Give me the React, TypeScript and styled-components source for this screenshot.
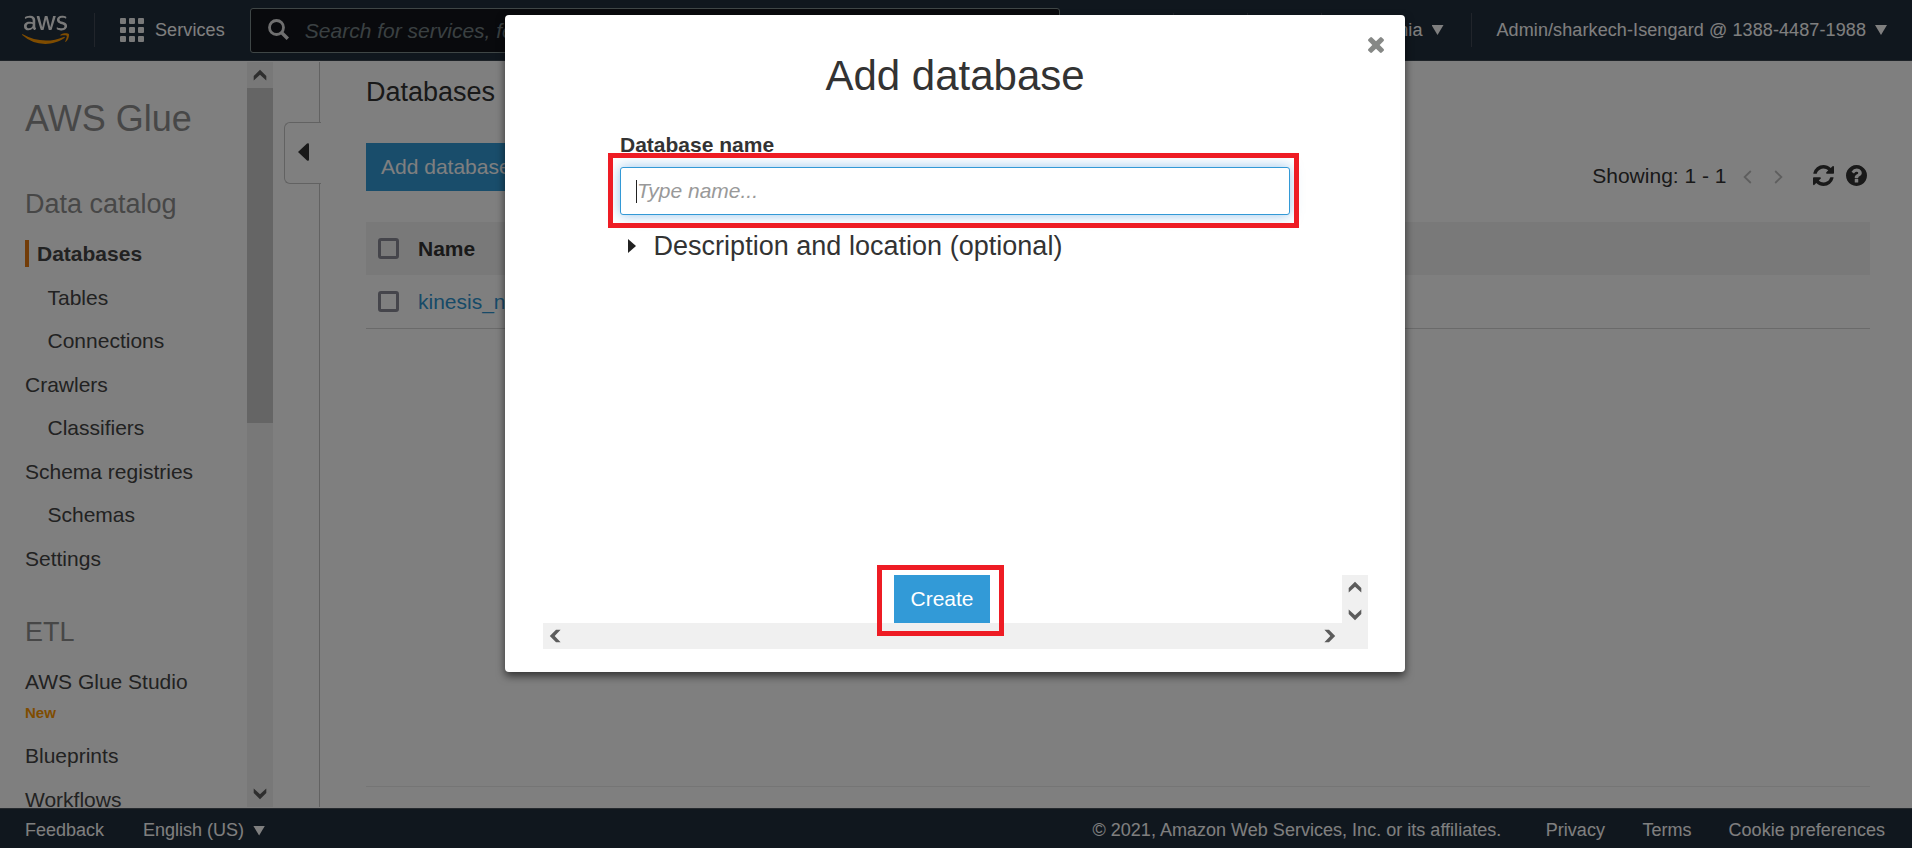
import React from "react";
import styled, { createGlobalStyle, css } from "styled-components";
import { FaAws } from "react-icons/fa";

const GlobalStyle = createGlobalStyle`
  * { box-sizing: border-box; }
  html, body { margin: 0; padding: 0; overflow: hidden; }
  body {
    font-family: "Liberation Sans", Arial, Helvetica, sans-serif;
    font-size: 21px;
    color: #333;
    background: #fff;
  }
  button, input { font: inherit; }
`;

const Page = styled.div`
  position: relative;
  display: flex;
  flex-direction: column;
  width: 1912px;
  height: 848px;
  overflow: hidden;
  background: #fff;
`;

/* ---------- top bar ---------- */

const TopBar = styled.header`
  display: flex;
  align-items: center;
  height: 61px;
  flex: none;
  background: #212e3c;
  border-bottom: 1px solid #3d4650;
  color: #fff;
  font-size: 18px;
  letter-spacing: 0.1px;
  white-space: nowrap;
`;

const LogoIcon = styled(FaAws)`
  flex: none;
  width: 47px;
  height: 37.6px;
  margin: -1px 0 0 21.5px;
  path { fill: url(#aws-logo-colors); }
`;

const GradientDefs = styled.svg`
  width: 0;
  height: 0;
  position: absolute;
`;

const Divider = styled.span<{ $before?: number; $after?: number }>`
  flex: none;
  width: 1px;
  height: 34px;
  margin: 0 ${(p) => p.$after ?? 0}px 0 ${(p) => p.$before ?? 0}px;
  background: #424a56;
`;

const GridIcon = styled.span`
  display: grid;
  grid-template-columns: repeat(3, 6px);
  gap: 3px;
  margin-right: 11px;
  i {
    height: 6px;
    border-radius: 1px;
    background: #f2f2f2;
  }
`;

const TopLabel = styled.span`
  line-height: 20px;
`;

const SearchBox = styled.div`
  display: flex;
  align-items: center;
  flex: none;
  width: 810px;
  height: 45px;
  margin-left: 25px;
  padding: 1px 0 0 17px;
  border: 1px solid #7f8c8d;
  border-radius: 3px;
  background: #12141a;
  color: #758184;
  font-size: 21px;
  font-style: italic;
  letter-spacing: 0;
  svg { margin: -2px 16px 0 0; }
`;

const TopRight = styled.div`
  display: flex;
  align-items: center;
  margin-left: auto;
  padding-right: 25px;
`;

const Caret = styled.span`
  width: 12px;
  height: 10px;
  margin-left: 9px;
  background: currentColor;
  clip-path: polygon(0 0, 100% 0, 50% 100%);
`;

/* ---------- sidebar ---------- */

const Body = styled.div`
  display: flex;
  flex: 1;
  min-height: 0;
  padding: 1px 0;
`;

const Sidebar = styled.nav`
  width: 247px;
  padding: 37px 0 0 25px;
  overflow: hidden;
  white-space: nowrap;
`;

const ServiceName = styled.h1`
  margin: 0 0 45px;
  font-size: 36px;
  font-weight: 400;
  line-height: 40px;
  color: #8f8f8f;
`;

const SectionTitle = styled.h2<{ $top?: number }>`
  margin: ${(p) => p.$top ?? 0}px 0 8px;
  font-size: 27px;
  font-weight: 400;
  line-height: 40px;
  color: #8f8f8f;
`;

const NavItem = styled.div<{ $level?: number; $active?: boolean }>`
  display: flex;
  align-items: center;
  height: 43.5px;
  padding-left: ${(p) => (p.$level ? 22.5 : 0)}px;
  color: #444;
  span { line-height: 27px; }
  ${(p) =>
    p.$active &&
    css`
      font-weight: 700;
      span {
        padding-left: 8px;
        border-left: 4px solid #e47911;
      }
    `}
`;

const NewTag = styled.div`
  margin-bottom: 13.5px;
  font-size: 15px;
  font-weight: 700;
  line-height: 17px;
  color: #f90;
`;

const ScrollTrack = styled.div`
  display: flex;
  flex: none;
  flex-direction: column;
  width: 26px;
  justify-content: space-between;
  background: #f0f0f0;
`;

const ScrollButton = styled.span<{ $width?: number; $height?: number }>`
  display: flex;
  flex: none;
  align-items: center;
  justify-content: center;
  width: ${(p) => p.$width ?? 26}px;
  height: ${(p) => p.$height ?? 26}px;
`;

const ScrollThumb = styled.span`
  height: 335px;
  margin-bottom: auto;
  background: #cacaca;
`;

const Gutter = styled.div`
  display: flex;
  flex-direction: column;
  flex: none;
  width: 47px;
`;

const GutterLine = styled.div<{ $height?: number }>`
  ${(p) => (p.$height ? `height: ${p.$height}px;` : "flex: 1;")}
  border-right: 1px solid #c4c4c4;
`;

const CollapseTab = styled.div`
  display: flex;
  align-items: center;
  width: 37px;
  height: 62px;
  margin-left: 11px;
  padding: 0 0 3px 13px;
  border: 1px solid #c4c4c4;
  border-right: 0;
  border-radius: 6px 0 0 6px;
`;

/* ---------- main content ---------- */

const Main = styled.main`
  display: flex;
  flex-direction: column;
  flex: 1;
  padding: 10px 42px 0 46px;
`;

const PageTitle = styled.h2`
  margin: 0;
  font-size: 27px;
  font-weight: 400;
  line-height: 40px;
`;

const Toolbar = styled.div`
  display: flex;
  align-items: center;
  margin: 31px 0;
  height: 48px;
`;

const PrimaryButton = styled.button<{ $width?: number }>`
  width: ${(p) => (p.$width ? `${p.$width}px` : "auto")};
  height: 48px;
  padding: 0 15px;
  border: 0;
  border-radius: 0;
  background: #329ad7;
  color: #fff;
  font-size: 21px;
  line-height: 48px;
  white-space: nowrap;
`;

const Pager = styled.div`
  display: flex;
  align-items: center;
  height: 22px;
  margin: 18px 3px 0 auto;
  svg { flex: none; }
`;

const PagerArrows = styled.span`
  display: flex;
  gap: 22px;
  margin: 1px 30px 0 16.5px;
`;

const PagerIcons = styled.span`
  display: flex;
  gap: 12px;
  margin-top: -1px;
`;

const TableRow = styled.div<{ $head?: boolean }>`
  display: flex;
  align-items: center;
  height: ${(p) => (p.$head ? 53 : 54)}px;
  padding-left: 12px;
  background: ${(p) => (p.$head ? "#f3f3f3" : "transparent")};
  border-bottom: ${(p) => (p.$head ? "0" : "1px solid #d5d5d5")};
  font-weight: ${(p) => (p.$head ? 700 : 400)};
`;

const CheckBox = styled.span`
  width: 21px;
  height: 21px;
  margin-right: 19px;
  border: 3px solid #8b8b97;
  border-radius: 3px;
`;

const LinkText = styled.a`
  color: #2f95d0;
`;

const BottomRule = styled.div`
  height: 1px;
  margin-top: auto;
  margin-bottom: 20px;
  background: #eaeaea;
`;

/* ---------- footer ---------- */

const Footer = styled.footer`
  display: flex;
  align-items: center;
  flex: none;
  height: 40px;
  padding: 4px 27px 0 25px;
  border-top: 1px solid #4a535c;
  background: #212e3c;
  color: #fff;
  font-size: 18px;
  white-space: nowrap;
`;

const FooterItem = styled.span<{ $gap?: number }>`
  display: flex;
  align-items: center;
  margin-left: ${(p) => p.$gap ?? 0}px;
`;

const FooterRight = styled.div`
  display: flex;
  margin-left: auto;
  letter-spacing: 0.02px;
`;

/* ---------- modal ---------- */

const Overlay = styled.div`
  position: absolute;
  inset: 0;
  display: flex;
  justify-content: center;
  align-items: flex-start;
  padding: 15px 2px 0 0;
  background: rgba(0, 0, 0, 0.5);
`;

const Dialog = styled.section`
  position: relative;
  display: flex;
  flex-direction: column;
  width: 900px;
  height: 657px;
  border-radius: 4px;
  background: #fff;
  box-shadow: 0 4px 9px rgba(0, 0, 0, 0.6);
`;

const CloseButton = styled.button`
  position: absolute;
  top: 22px;
  right: 21px;
  display: flex;
  padding: 0;
  border: 0;
  background: none;
`;

const DialogTitle = styled.h2`
  margin: 37px 0 33px;
  font-size: 42px;
  font-weight: 400;
  line-height: 48px;
  text-align: center;
`;

const Form = styled.div`
  display: flex;
  flex-direction: column;
  flex: 1;
  width: 670px;
  margin-left: 115px;
`;

const FieldLabel = styled.label`
  font-weight: 700;
  line-height: 23px;
`;

const Field = styled.div`
  position: relative;
  margin-top: -1px;
  padding-top: 12px;
  padding-bottom: 15px;
`;

const TextInput = styled.div`
  display: flex;
  align-items: center;
  height: 48px;
  padding-left: 15px;
  border: 1px solid #3399d6;
  border-radius: 3px;
  background: #fff;
  box-shadow: 0 0 13px rgba(51, 140, 215, 0.5);
  color: #999;
  font-style: italic;
`;

const TextCursor = styled.span`
  width: 1px;
  height: 23px;
  background: #222;
`;

const FieldHighlight = styled.span`
  position: absolute;
  top: -2px;
  left: -12px;
  width: 691px;
  height: 75px;
  border: 5px solid #ee1c24;
`;

const Disclosure = styled.div`
  display: flex;
  align-items: center;
  padding-left: 8px;
  font-size: 27px;
  line-height: 32px;
  letter-spacing: 0.02px;
  svg { margin-right: 17.5px; }
`;

const ActionArea = styled.div`
  display: flex;
  flex-direction: column;
  width: 825px;
  margin: 0 0 23px 38px;
`;

const ActionRow = styled.div`
  display: flex;
  justify-content: flex-end;
  height: 48px;
`;

const CreateWrap = styled.div`
  position: relative;
  margin-right: 352px;
`;

const CreateHighlight = styled.span`
  position: absolute;
  top: -10px;
  left: -17px;
  width: 127px;
  height: 71px;
  border: 5px solid #ee1c24;
`;

const HorizontalScroll = styled.div`
  display: flex;
  justify-content: space-between;
  height: 26px;
  padding-right: 26px;
  background: #f0f0f0;
`;

/* ---------- icons ---------- */

const chevronTurn = { up: 0, right: 90, down: 180, left: 270 };

function ScrollChevron({ dir }: { dir: keyof typeof chevronTurn }) {
  return (
    <svg width="14" height="14" viewBox="-7 -7 14 14">
      <path
        d="M-6.3 1 0-5.2 6.3 1v4.6L0-.3-6.3 5.600Z"
        fill="#5c5c5c"
        transform={`rotate(${chevronTurn[dir]})`}
      />
    </svg>
  );
}

function SearchGlyph() {
  return (
    <svg width="21" height="21" viewBox="0 0 21 21" fill="none" stroke="#dedede" strokeWidth="2.8">
      <circle cx="8.5" cy="8.5" r="7" />
      <path d="m13.5 13.5 6.3 6.3" strokeWidth="3.4" />
    </svg>
  );
}

function TimesIcon() {
  return (
    <svg width="16" height="16" viewBox="302 366 1188 1188" fill="#868886">
      <path d="M1490 1322q0 40-28 68l-136 136q-28 28-68 28t-68-28l-294-294-294 294q-28 28-68 28t-68-28l-136-136q-28-28-28-68t28-68l294-294-294-294q-28-28-28-68t28-68l136-136q28-28 68-28t68 28l294 294 294-294q28-28 68-28t68 28l136 136q28 28 28 68t-28 68l-294 294 294 294q28 28 28 68z" />
    </svg>
  );
}

function RefreshIcon() {
  return (
    <svg width="21" height="21" viewBox="128 128 1536 1536" fill="#333">
      <path d="M1639 1056q0 5-1 7-64 268-268 434.5t-478 166.5q-146 0-282.5-55t-243.5-157l-129 129q-19 19-45 19t-45-19-19-45v-448q0-26 19-45t45-19h448q26 0 45 19t19 45-19 45l-137 137q71 66 161 102t187 36q134 0 250-65t186-179q11-17 53-117 8-23 30-23h192q13 0 22.5 9.5t9.5 22.5zm25-800v448q0 26-19 45t-45 19h-448q-26 0-45-19t-19-45 19-45l138-138q-148-137-349-137-134 0-250 65t-186 179q-11 17-53 117-8 23-30 23h-199q-13 0-22.5-9.5t-9.5-22.5v-7q65-268 270-434.5t480-166.5q146 0 284 55.5t245 156.5l130-129q19-19 45-19t45 19 19 45z" />
    </svg>
  );
}

function HelpIcon() {
  return (
    <svg width="21" height="21" viewBox="128 128 1536 1536" fill="#333">
      <path d="M1024 1376v-192q0-14-9-23t-23-9h-192q-14 0-23 9t-9 23v192q0 14 9 23t23 9h192q14 0 23-9t9-23zm256-672q0-88-55.5-163t-138.5-116-170-41q-243 0-371 213-15 24 8 42l132 100q7 6 19 6 16 0 25-12 53-68 86-92 34-24 86-24 48 0 85.5 26t37.5 59q0 38-20 61t-68 45q-63 28-115.5 86.5t-52.5 125.5v36q0 14 9 23t23 9h192q14 0 23-9t9-23q0-19 21.5-49.5t54.5-49.5q32-18 49-28.5t46-35 44.5-48 28-60.5 12.5-81zm384 192q0 209-103 385.5t-279.5 279.5-385.5 103-385.5-103-279.5-279.5-103-385.5 103-385.5 279.5-279.5 385.5-103 385.5 103 279.5 279.5 103 385.5z" />
    </svg>
  );
}

function PageArrow({ next }: { next?: boolean }) {
  return (
    <svg width="9" height="14" viewBox="0 0 9 14" fill="none" stroke="#bdbdbd" strokeWidth="1.8">
      <path d={next ? "M1.2 1 7.4 7l-6.2 6" : "M7.8 1 1.6 7l6.2 6"} />
    </svg>
  );
}

const catalogLinks = [
  { label: "Databases", active: true },
  { label: "Tables", level: 1 },
  { label: "Connections", level: 1 },
  { label: "Crawlers" },
  { label: "Classifiers", level: 1 },
  { label: "Schema registries" },
  { label: "Schemas", level: 1 },
  { label: "Settings" },
];

export default function App() {
  return (
    <Page>
      <GlobalStyle />
      <TopBar>
        <GradientDefs>
          <linearGradient id="aws-logo-colors" x1="0" y1="0" x2="0" y2="1">
            <stop offset="0.62" stopColor="#f5f5f5" />
            <stop offset="0.62" stopColor="#f90" />
          </linearGradient>
        </GradientDefs>
        <LogoIcon />
        <Divider $before={25.5} $after={25} />
        <GridIcon>
          {Array.from({ length: 9 }, (_, i) => (
            <i key={i} />
          ))}
        </GridIcon>
        <TopLabel>Services</TopLabel>
        <SearchBox>
          <SearchGlyph />
          Search for services, features
        </SearchBox>
        <TopRight>
          <Divider $after={73} />
          <Divider $after={73} />
          <Divider $after={17} />
          <TopLabel>N. Virginia</TopLabel>
          <Caret />
          <Divider $before={27} $after={25} />
          <TopLabel>Admin/sharkech-Isengard @ 1388-4487-1988</TopLabel>
          <Caret />
        </TopRight>
      </TopBar>

      <Body>
        <Sidebar>
          <ServiceName>AWS Glue</ServiceName>
          <SectionTitle>Data catalog</SectionTitle>
          {catalogLinks.map((l) => (
            <NavItem key={l.label} $level={l.level} $active={l.active}>
              <span>{l.label}</span>
            </NavItem>
          ))}
          <SectionTitle $top={32}>ETL</SectionTitle>
          <NavItem>
            <span>AWS Glue Studio</span>
          </NavItem>
          <NewTag>New</NewTag>
          <NavItem>
            <span>Blueprints</span>
          </NavItem>
          <NavItem>
            <span>Workflows</span>
          </NavItem>
        </Sidebar>
        <ScrollTrack>
          <ScrollButton>
            <ScrollChevron dir="up" />
          </ScrollButton>
          <ScrollThumb />
          <ScrollButton>
            <ScrollChevron dir="down" />
          </ScrollButton>
        </ScrollTrack>
        <Gutter>
          <GutterLine $height={60} />
          <CollapseTab>
            <svg width="11" height="18" viewBox="0 0 11 18">
              <path d="M0 9 9 .5Q11-.5 11 1.500v15Q11 18.500 9 17.500Z" fill="#333" />
            </svg>
          </CollapseTab>
          <GutterLine />
        </Gutter>
        <Main>
          <PageTitle>Databases</PageTitle>
          <Toolbar>
            <PrimaryButton>Add database</PrimaryButton>
            <Pager>
              Showing: 1 - 1
              <PagerArrows>
                <PageArrow />
                <PageArrow next />
              </PagerArrows>
              <PagerIcons>
                <RefreshIcon />
                <HelpIcon />
              </PagerIcons>
            </Pager>
          </Toolbar>
          <TableRow $head>
            <CheckBox />
            Name
          </TableRow>
          <TableRow>
            <CheckBox />
            <LinkText>kinesis_n</LinkText>
          </TableRow>
          <BottomRule />
        </Main>
      </Body>

      <Footer>
        <FooterItem>Feedback</FooterItem>
        <FooterItem $gap={39}>
          English (US)
          <Caret />
        </FooterItem>
        <FooterRight>
          <FooterItem>© 2021, Amazon Web Services, Inc. or its affiliates.</FooterItem>
          <FooterItem $gap={44.5}>Privacy</FooterItem>
          <FooterItem $gap={37.5}>Terms</FooterItem>
          <FooterItem $gap={37}>Cookie preferences</FooterItem>
        </FooterRight>
      </Footer>

      <Overlay>
        <Dialog>
          <CloseButton aria-label="Close">
            <TimesIcon />
          </CloseButton>
          <DialogTitle>Add database</DialogTitle>
          <Form>
            <FieldLabel>Database name</FieldLabel>
            <Field>
              <TextInput>
                <TextCursor />
                Type name...
              </TextInput>
              <FieldHighlight />
            </Field>
            <Disclosure>
              <svg width="8" height="14" viewBox="0 0 8 14">
                <path d="M0 0 8 7 0 14Z" fill="#222" />
              </svg>
              Description and location (optional)
            </Disclosure>
          </Form>
          <ActionArea>
            <ActionRow>
              <CreateWrap>
                <PrimaryButton $width={96}>Create</PrimaryButton>
                <CreateHighlight />
              </CreateWrap>
              <ScrollTrack>
                <ScrollButton $height={24}>
                  <ScrollChevron dir="up" />
                </ScrollButton>
                <ScrollButton $height={17}>
                  <ScrollChevron dir="down" />
                </ScrollButton>
              </ScrollTrack>
            </ActionRow>
            <HorizontalScroll>
              <ScrollButton $width={24}>
                <ScrollChevron dir="left" />
              </ScrollButton>
              <ScrollButton $width={24}>
                <ScrollChevron dir="right" />
              </ScrollButton>
            </HorizontalScroll>
          </ActionArea>
        </Dialog>
      </Overlay>
    </Page>
  );
}
